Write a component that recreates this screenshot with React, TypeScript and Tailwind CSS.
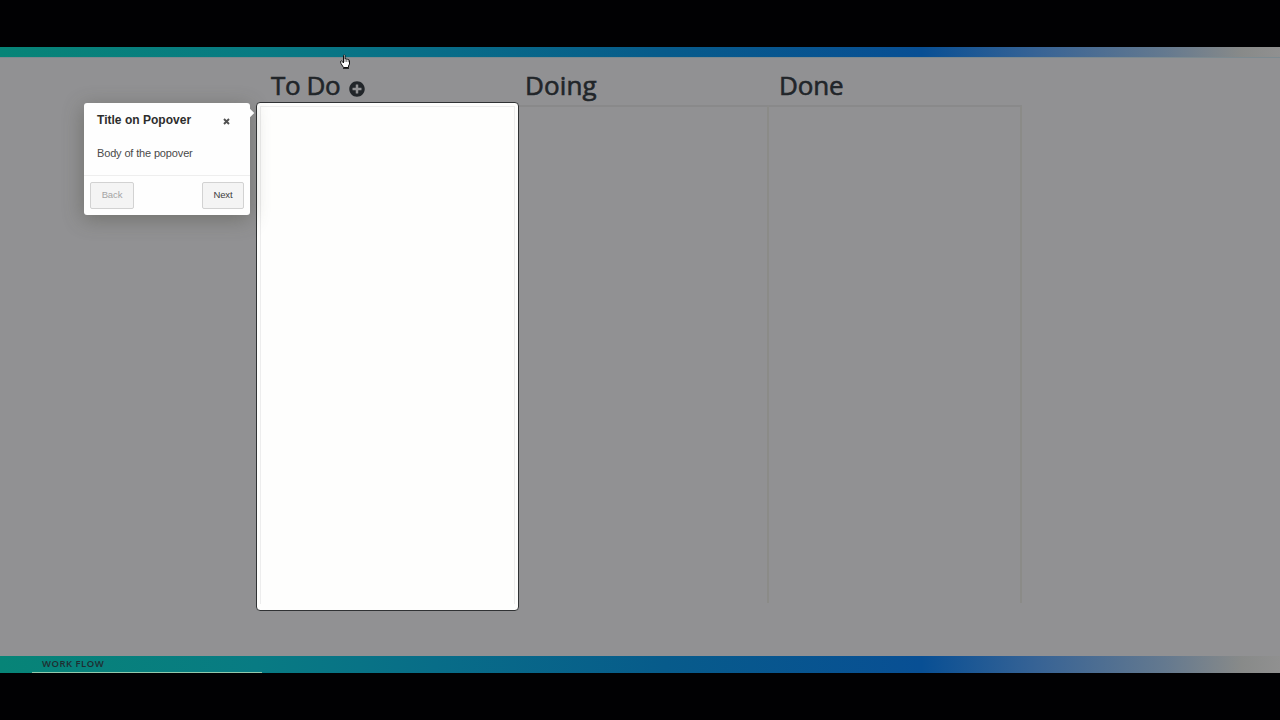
import React from "react";

const headingClass =
  "h-[47px] pl-[10px] pt-[8px] text-[26px] leading-[38px] font-medium text-[#212529] whitespace-nowrap [-webkit-text-stroke:0.6px_#212529]";

function PlusIcon() {
  return (
    <svg className="mt-[7px] size-[16px]" viewBox="0 0 512 512" fill="#212529" aria-hidden="true">
      <path d="M256 8C119 8 8 119 8 256s111 248 248 248 248-111 248-248S393 8 256 8zm144 276c0 6.600-5.400 12-12 12h-92v92c0 6.600-5.400 12-12 12h-56c-6.600 0-12-5.400-12-12v-92h-92c-6.600 0-12-5.400-12-12v-56c0-6.600 5.400-12 12-12h92v-92c0-6.600 5.400-12 12-12h56c6.600 0 12 5.400 12 12v92h92c6.600 0 12 5.400 12 12v56z" />
    </svg>
  );
}

function HandCursor() {
  return (
    <svg className="absolute left-[340px] top-[54px] h-[15px] w-[11px]" viewBox="0 0 11 15" aria-hidden="true">
      <path
        d="M3.500 9V1.500Q4.250 0 5 1.500V5Q5.800 4.200 6.600 5.200Q7.500 4.600 8.100 5.800Q9 5.300 9.500 6.500V10L8.500 12V13.500H3.500L1 9.500L.500 7.500Q1.300 6.300 2.500 7.700Z"
        fill="#fff"
        stroke="#111"
        strokeWidth="1"
      />
      <path d="M5 5v3M6.700 5.500v2.500M8.300 6v2.200" stroke="#222" strokeWidth=".6" />
      <path d="M3 14.300h6" stroke="#111" strokeWidth="1" />
    </svg>
  );
}

function Popover() {
  return (
    <section className="absolute left-[84px] top-[103px] flex h-[112px] w-[166px] flex-col rounded-[3px] bg-[#fefefe] font-['Liberation_Sans',sans-serif] shadow-[-1px_4px_20px_rgba(70,70,55,0.42)]">
      <span className="absolute right-[-3px] top-[7px] size-[6px] rotate-45 bg-[#fefefe]" />
      <header className="flex h-[34px] items-center justify-between pl-[13px] pr-[20px]">
        <h2 className="text-[12px] leading-[16px] font-bold tracking-[0.020px] whitespace-nowrap text-[#2d2d2d]">Title on Popover</h2>
        <button className="flex size-[7px] items-center justify-center" aria-label="Close">
          <svg className="mt-[2px] size-[7px] shrink-0" viewBox="0 0 7 7" aria-hidden="true">
            <path d="M1 1l5 5M6 1L1 6" stroke="#505050" strokeWidth="1.900" />
          </svg>
        </button>
      </header>
      <p className="h-[38px] pl-[13px] pt-[9px] text-[11px] leading-[15px] tracking-[-0.150px] whitespace-nowrap text-[#4a4a4a]">Body of the popover</p>
      <footer className="flex h-[40px] items-start justify-between border-t border-[#eeeeee] px-[6px] pt-[5px] text-[9.500px]">
        <button className="mt-px h-[27px] w-[44px] rounded-[2px] border border-[#d2d2d2] bg-[#f4f4f4] tracking-[-0.100px] text-[#a4a4a4]">Back</button>
        <button className="mt-px h-[27px] w-[42px] rounded-[2px] border border-[#d2d2d2] bg-[#f4f4f4] tracking-[-0.100px] text-[#3d3d3d]">Next</button>
      </footer>
    </section>
  );
}

export default function App() {
  return (
    <div className="relative flex h-[720px] w-[1280px] flex-col overflow-hidden bg-[#010103] font-['Open_Sans','Noto_Sans',sans-serif]">
      <div className="h-[47px] shrink-0" />
      <div className="h-[10px] shrink-0 bg-[linear-gradient(90deg,#078477_0%,#087b83_20%,#086d88_34%,#075b8b_52%,#084f94_72%,#376395_81%,#64798f_91%,#888a89_97%,#909090_100%)]" />
      <main className="flex h-[599px] shrink-0 border-t border-[#7d8b91] bg-[#919193] pl-[261px]">
        <section className="w-[254px]">
          <h1 className={headingClass + " flex gap-[8px]"}>
            <span className="w-[69.500px] tracking-[-0.400px]">To Do</span>
            <button className="flex h-[38px] items-center" aria-label="Add task"><PlusIcon /></button>
          </h1>
        </section>
        <section className="w-[254px]">
          <h1 className={headingClass}><span className="tracking-[0.150px]">Doing</span></h1>
          <div className="h-[498px] border-t-2 border-r-2 border-t-[#89898a] border-r-[#8b8b88]" />
        </section>
        <section className="w-[253px]">
          <h1 className={headingClass}><span className="tracking-[-0.150px]">Done</span></h1>
          <div className="h-[498px] border-t-2 border-r-2 border-t-[#89898a] border-r-[#8b8b88]" />
        </section>
      </main>
      <footer className="h-[17px] shrink-0 bg-[linear-gradient(90deg,#078477_0%,#087b83_20%,#086d88_34%,#075b8b_52%,#084f94_72%,#376395_81%,#64798f_91%,#888a89_97%,#909090_100%)] pl-[32px]">
        <div className="h-[17px] w-[230px] border-b border-[#92c9ad] pl-[10px] text-[9.500px] leading-[16px] font-semibold tracking-[0.500px] text-[#202c30]">WORK FLOW</div>
      </footer>
      <div className="absolute left-[256px] top-[102px] h-[509px] w-[263px] rounded-[4px] border border-[#303234] bg-[#fefefd] p-[3px]">
        <div className="h-[498px] border-x border-t border-[#ededed]" />
      </div>
      <Popover />
      <HandCursor />
    </div>
  );
}
